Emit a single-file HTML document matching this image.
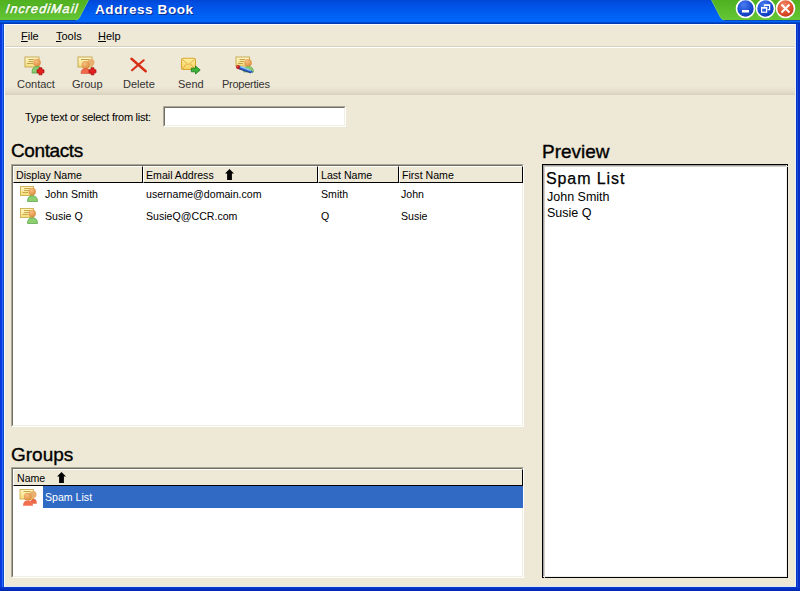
<!DOCTYPE html>
<html><head><meta charset="utf-8">
<style>
*{margin:0;padding:0;box-sizing:border-box}
html,body{width:800px;height:591px;overflow:hidden;background:#0831D9;font-family:"Liberation Sans",sans-serif}
.a{position:absolute;white-space:nowrap;line-height:1}
.menu{top:30.5px;font-size:11px;color:#000;text-underline-offset:1px}
.tb{top:79px;font-size:11px;color:#333}
.hdr{font-size:19px;color:#000;-webkit-text-stroke:0.35px #000}
.sm{font-size:10.6px;color:#000}
.box{background:#fff;border-top:1px solid #ACA899;border-left:1px solid #ACA899;border-right:1px solid #fff;border-bottom:1px solid #fff}
.box>div.in{position:absolute;left:0;top:0;right:0;bottom:0;border-top:1px solid #716F64;border-left:1px solid #716F64;border-right:1px solid #F1EFE2;border-bottom:1px solid #F1EFE2}
.colh{position:absolute;top:0;height:17px;background:#EEE8D6;border-top:1px solid #fff;border-left:1px solid #fff;border-bottom:1px solid #000;border-right:1px solid #000}
</style></head><body>
<!-- title bar -->
<svg class="a" style="left:0;top:0" width="800" height="24">
  <defs>
    <linearGradient id="tb" x1="0" y1="0" x2="0" y2="24" gradientUnits="userSpaceOnUse">
      <stop offset="0" stop-color="#0046D6"/><stop offset="0.167" stop-color="#0050E2"/><stop offset="0.417" stop-color="#0058EC"/><stop offset="0.667" stop-color="#0062F6"/><stop offset="0.896" stop-color="#0066FA"/><stop offset="0.9375" stop-color="#0048CC"/><stop offset="1" stop-color="#0034A8"/>
    </linearGradient>
    <linearGradient id="gr" x1="0" y1="0" x2="0" y2="1">
      <stop offset="0" stop-color="#50B020"/><stop offset="0.6" stop-color="#5CBE2C"/><stop offset="1" stop-color="#66C636"/>
    </linearGradient>
    <radialGradient id="bb" cx="0.4" cy="0.3" r="0.8">
      <stop offset="0" stop-color="#4A7CF0"/><stop offset="0.55" stop-color="#1A4CD0"/><stop offset="1" stop-color="#0A34A8"/>
    </radialGradient>
    <radialGradient id="rb" cx="0.4" cy="0.3" r="0.8">
      <stop offset="0" stop-color="#F08868"/><stop offset="0.55" stop-color="#E0502A"/><stop offset="1" stop-color="#B83012"/>
    </radialGradient>
  </defs>
  <rect x="0" y="0" width="800" height="24" fill="url(#tb)"/>
  
  <path d="M0 0 H88.5 L79.5 17.5 Q78 20 75 20 H0 Z" fill="url(#gr)"/>
  <path d="M88.5 0 L79.5 17.5 Q78 20 75 20" fill="none" stroke="#8AD85A" stroke-width="1" opacity="0.7"/><rect x="0" y="20" width="76" height="1" fill="#0A4AB8"/>
  <path d="M711.5 0 H800 V20 H725 Q722 20 720.5 17.5 Z" fill="url(#gr)"/>
  <path d="M711.5 0 L720.5 17.5 Q722 20 725 20" fill="none" stroke="#8AD85A" stroke-width="1" opacity="0.7"/><rect x="724" y="20" width="76" height="1" fill="#0A4AB8"/>
  <g stroke="#fff" stroke-width="1.6">
    <circle cx="745.5" cy="8.5" r="9" fill="url(#bb)"/>
    <circle cx="765.5" cy="8.5" r="9" fill="url(#bb)"/>
    <circle cx="785.5" cy="8.5" r="9" fill="url(#rb)"/>
  </g>
  <rect x="742" y="10" width="7" height="2.5" fill="#fff"/>
  <g fill="none" stroke="#fff" stroke-width="1.2">
    <rect x="761.6" y="7.6" width="5" height="4.6"/>
    <path d="M764.5 6.5 V5.1 H769.6 V9.6 H767.5"/>
  </g>
  <rect x="761" y="7" width="6.2" height="1.6" fill="#fff"/>
  <rect x="764" y="4.5" width="6.2" height="1.4" fill="#fff"/>
  <path d="M781.5 4.5 L789.5 12.5 M789.5 4.5 L781.5 12.5" stroke="#fff" stroke-width="2"/>
</svg>
<div class="a" style="left:5px;top:3px;color:#F4FFE8;font-weight:normal;font-style:italic;font-size:12.5px;letter-spacing:1.1px;-webkit-text-stroke:0.7px #F4FFE8;transform:skewX(-8deg);transform-origin:0 100%;text-shadow:0 0 1.2px #1A5A08,0 0 1px #1A5A08">IncrediMail</div>
<div class="a" style="left:95px;top:2.5px;color:#fff;font-weight:bold;font-size:13.5px;letter-spacing:0.6px;text-shadow:1px 1px 0 #0A2A90">Address Book</div>

<!-- frame -->
<div class="a" style="left:0;top:24px;width:2px;height:567px;background:#0838E0"></div>
<div class="a" style="left:2px;top:24px;width:1px;height:563px;background:#2868F0"></div>
<div class="a" style="left:3px;top:24px;width:1px;height:563px;background:#0A48D8"></div>
<div class="a" style="left:796px;top:24px;width:4px;height:567px;background:#0830C8"></div>
<div class="a" style="left:797px;top:24px;width:1px;height:563px;background:#1850D8"></div>
<div class="a" style="left:0;top:587px;width:800px;height:4px;background:linear-gradient(#0838D0,#0028B0)"></div>
<div class="a" style="left:4px;top:24px;width:792px;height:563px;background:#EEE8D6"></div>
<div class="a" style="left:4px;top:24px;width:792px;height:1px;background:#FAFCFF"></div>
<div class="a" style="left:4px;top:586px;width:792px;height:1px;background:#DDEBF6"></div>
<div class="a" style="left:4px;top:24px;width:1px;height:563px;background:#F4F8FF"></div>
<div class="a" style="left:795px;top:24px;width:1px;height:563px;background:#E8F0F8"></div>

<!-- menu -->
<div class="a menu" style="left:21px"><u>F</u>ile</div>
<div class="a menu" style="left:56px"><u>T</u>ools</div>
<div class="a menu" style="left:98px"><u>H</u>elp</div>
<div class="a" style="left:5px;top:46px;width:790px;height:1px;background:#D8D2BD"></div>
<div class="a" style="left:5px;top:47px;width:790px;height:1px;background:#fff"></div>

<!-- toolbar -->
<div class="a" style="left:5px;top:86px;width:790px;height:9px;background:linear-gradient(#EEE8D6,#E4DECB 60%,#D8D1BD)"></div>
<div class="a tb" style="left:17px">Contact</div>
<div class="a tb" style="left:72px">Group</div>
<div class="a tb" style="left:123px">Delete</div>
<div class="a tb" style="left:178px">Send</div>
<div class="a tb" style="left:222px;letter-spacing:-0.25px">Properties</div>

<!-- toolbar icons -->
<svg class="a" style="left:0;top:0" width="800" height="100">
  <defs>
    <linearGradient id="card" x1="0" y1="0" x2="0" y2="1"><stop offset="0" stop-color="#FFF8C8"/><stop offset="1" stop-color="#F4DC78"/></linearGradient>
    <radialGradient id="head" cx="0.4" cy="0.35" r="0.7"><stop offset="0" stop-color="#F8C080"/><stop offset="1" stop-color="#D88838"/></radialGradient>
    <linearGradient id="env" x1="0" y1="0" x2="0" y2="1"><stop offset="0" stop-color="#FFEFA0"/><stop offset="1" stop-color="#F8D060"/></linearGradient>
  </defs>
  <!-- Contact -->
  <rect x="25" y="57" width="14" height="10" fill="url(#card)" stroke="#C8AC58" stroke-width="1"/>
  <path d="M28.5 59.5 H34 M28.5 61.5 H33 M27 63.5 H33" stroke="#B89840" stroke-width="0.9"/>
  <circle cx="37" cy="62.5" r="3.8" fill="url(#head)"/>
  <path d="M32 73 Q32 66.5 37 66.5 Q42 66.5 42 73 Z" fill="#88CC70" stroke="#5A9E48" stroke-width="0.8"/>
  <path d="M39 67.8 h3 v2 h2 v3 h-2 v2 h-3 v-2 h-2 v-3 h2 z" fill="#E42020" stroke="#A80808" stroke-width="0.7"/>
  <!-- Group -->
  <rect x="78" y="57" width="14" height="10" fill="url(#card)" stroke="#C8AC58" stroke-width="1"/>
  <path d="M81 59.5 H89" stroke="#B89840" stroke-width="0.9"/>
  <circle cx="91" cy="62.5" r="3.5" fill="#E8B070"/>
  <circle cx="85.6" cy="65" r="4" fill="url(#head)"/>
  <path d="M81 73.5 Q81 68.5 85.6 68.5 Q90.5 68.5 90.5 73.5 Z" fill="#F06848" stroke="#D05030" stroke-width="0.6"/>
  <path d="M91 67.8 h3 v2 h2 v3 h-2 v2 h-3 v-2 h-2 v-3 h2 z" fill="#E42020" stroke="#A80808" stroke-width="0.7"/>
  <!-- Delete -->
  <path d="M131.5 58.8 L145.7 71.3" stroke="#D83018" stroke-width="2.5" stroke-linecap="round"/>
  <path d="M143.7 60.3 L132 70.2" stroke="#D83018" stroke-width="2.1" stroke-linecap="round"/>
  <!-- Send -->
  <rect x="181.5" y="58.3" width="14" height="11.2" rx="2" fill="url(#env)" stroke="#D8A830" stroke-width="1.1"/>
  <path d="M182.5 59.5 L188.5 64.8 L194.5 59.5 M182.5 68.8 L186.5 64 M194.5 68.8 L190.5 64" fill="none" stroke="#D0A030" stroke-width="0.8"/>
  <path d="M191.3 68.2 H195.5 V66 L200.2 70 L195.5 74 V71.8 H191.3 Z" fill="#3CB43C" stroke="#187818" stroke-width="0.8"/>
  <!-- Properties -->
  <rect x="236" y="57" width="13.5" height="9" fill="url(#card)" stroke="#C8AC58" stroke-width="1"/>
  <path d="M239.5 59.5 H245 M239.5 61.5 H244 M238 63.5 H243" stroke="#B89840" stroke-width="0.9"/>
  <circle cx="248" cy="62.7" r="3.8" fill="url(#head)"/>
  <path d="M243.5 72 Q243.5 66.5 248.5 66.5 Q253.5 66.5 253.5 72 Z" fill="#88CC70" stroke="#5A9E48" stroke-width="0.6"/>
  <path d="M238.5 65.6 L251.5 70.6 L253.2 72.6 L250.6 72.8 L237.6 68.6 Z" fill="#2A58C0"/>
  <path d="M239.5 66.4 L251 70.8" stroke="#70B0F0" stroke-width="1.3"/>
  <path d="M241 66.6 L249.5 69.9" stroke="#B8E0FA" stroke-width="0.6"/>
  <path d="M238.5 68.8 L251 73" stroke="#1A3080" stroke-width="0.8"/>
  <circle cx="238" cy="67" r="2" fill="#C01818"/>
  <circle cx="237.6" cy="66.5" r="0.8" fill="#E86060"/>
</svg>

<!-- search -->
<div class="a sm" style="left:25px;top:112px;font-size:11px;letter-spacing:-0.27px">Type text or select from list:</div>
<div class="a" style="left:163px;top:106px;width:183px;height:21px;background:#fff;border-top:1px solid #ACA899;border-left:1px solid #ACA899;border-right:1px solid #fff;border-bottom:1px solid #fff">
  <div style="position:absolute;left:0;top:0;right:0;bottom:0;border-top:1px solid #716F64;border-left:1px solid #716F64;border-right:1px solid #F1EFE2;border-bottom:1px solid #F1EFE2"></div>
</div>

<!-- Contacts -->
<div class="a hdr" style="left:11px;top:141px;letter-spacing:-0.4px">Contacts</div>
<div class="a box" style="left:11px;top:164px;width:513px;height:263px"><div class="in"></div></div>
<div class="a colh" style="left:13px;top:166px;width:130px"></div>
<div class="a colh" style="left:143px;top:166px;width:175px"></div>
<div class="a colh" style="left:318px;top:166px;width:81px"></div>
<div class="a colh" style="left:399px;top:166px;width:124px"></div>
<div class="a sm" style="left:16px;top:170px">Display Name</div>
<div class="a sm" style="left:146px;top:170px">Email Address</div>
<svg class="a" style="left:224px;top:169px" width="11" height="11" viewBox="0 0 11 11"><path d="M5.5 0 L10 4.5 H7.9 V11 H3.1 V4.5 H1 Z" fill="#000"/></svg>
<div class="a sm" style="left:321px;top:170px">Last Name</div>
<div class="a sm" style="left:402px;top:170px">First Name</div>

<svg class="a" style="left:19px;top:185px" width="20" height="18" viewBox="0 0 20 18"><use href="#ci"/></svg>
<svg class="a" style="left:19px;top:207px" width="20" height="18" viewBox="0 0 20 18"><use href="#ci"/></svg>
<svg width="0" height="0" style="position:absolute">
  <defs>
    <g id="ci">
      <rect x="1.5" y="1.5" width="13" height="9" fill="url(#card)" stroke="#D4B458"/>
      <path d="M5 3.5 H11 M5 5.5 H10 M3.5 7.5 H9" stroke="#C8A848" stroke-width="1"/>
      <circle cx="13.2" cy="6.5" r="3.7" fill="url(#head)"/>
      <path d="M8.5 16.5 Q8.5 10.8 13.2 10.8 Q18.5 10.8 18.5 16.5 Z" fill="#8CD070" stroke="#62A852" stroke-width="0.8"/>
    </g>
    <g id="gi">
      <rect x="2" y="1.5" width="13.5" height="9.5" fill="url(#card)" stroke="#D4B458"/>
      <path d="M5.5 3.5 H12.5" stroke="#C8A848" stroke-width="1"/>
      <circle cx="15.1" cy="6.4" r="3.5" fill="#E8B070"/>
      <path d="M12.5 15.8 Q12.5 10.8 15.6 10.8 Q18.8 10.8 18.8 15.8 Z" fill="#E86848"/>
      <circle cx="9.8" cy="8.7" r="3.9" fill="url(#head)"/>
      <path d="M5 17.8 Q5 12.4 10 12.4 Q15 12.4 15 17.8 Z" fill="#F07050"/>
    </g>
  </defs>
</svg>
<div class="a sm" style="left:45px;top:189px">John Smith</div>
<div class="a sm" style="left:146px;top:189px">username@domain.com</div>
<div class="a sm" style="left:321px;top:189px">Smith</div>
<div class="a sm" style="left:401px;top:189px">John</div>
<div class="a sm" style="left:45px;top:211px">Susie Q</div>
<div class="a sm" style="left:146px;top:211px">SusieQ@CCR.com</div>
<div class="a sm" style="left:321px;top:211px">Q</div>
<div class="a sm" style="left:401px;top:211px">Susie</div>

<!-- Groups -->
<div class="a hdr" style="left:11px;top:445px">Groups</div>
<div class="a box" style="left:11px;top:467px;width:513px;height:111px"><div class="in"></div></div>
<div class="a colh" style="left:13px;top:469px;width:510px"></div>
<div class="a sm" style="left:17px;top:473px">Name</div>
<svg class="a" style="left:56px;top:472px" width="11" height="11" viewBox="0 0 11 11"><path d="M5.5 0 L10 4.5 H7.9 V11 H3.1 V4.5 H1 Z" fill="#000"/></svg>
<div class="a" style="left:43px;top:486px;width:480px;height:22px;background:#316AC5"></div>
<svg class="a" style="left:18px;top:488px" width="20" height="18" viewBox="0 0 20 18"><use href="#gi"/></svg>
<div class="a sm" style="left:45px;top:492px;color:#fff">Spam List</div>

<!-- Preview -->
<div class="a hdr" style="left:542px;top:142px">Preview</div>
<div class="a" style="left:542px;top:164px;width:246px;height:414px;background:#fff;border:1px solid #000">
  <div style="position:absolute;left:0;top:0;width:1px;height:100%;background:#A0A0A0"></div>
  <div style="position:absolute;left:0;top:0;width:100%;height:1px;background:#A0A0A0"></div>
  <div style="position:absolute;left:1px;top:1px;width:1px;height:100%;background:#D4D0C8"></div>
  <div style="position:absolute;left:1px;top:1px;width:100%;height:1px;background:#D4D0C8"></div>
  <div style="position:absolute;right:0;top:0;width:1px;height:100%;background:#F0EEE8"></div>
  <div style="position:absolute;left:0;bottom:0;width:100%;height:1px;background:#F0EEE8"></div>
</div>
<div class="a" style="left:546px;top:171px;font-size:16px;letter-spacing:0.9px;-webkit-text-stroke:0.25px #000">Spam List</div>
<div class="a" style="left:547px;top:191px;font-size:12.5px">John Smith</div>
<div class="a" style="left:547px;top:207px;font-size:12.5px">Susie Q</div>
</body></html>
